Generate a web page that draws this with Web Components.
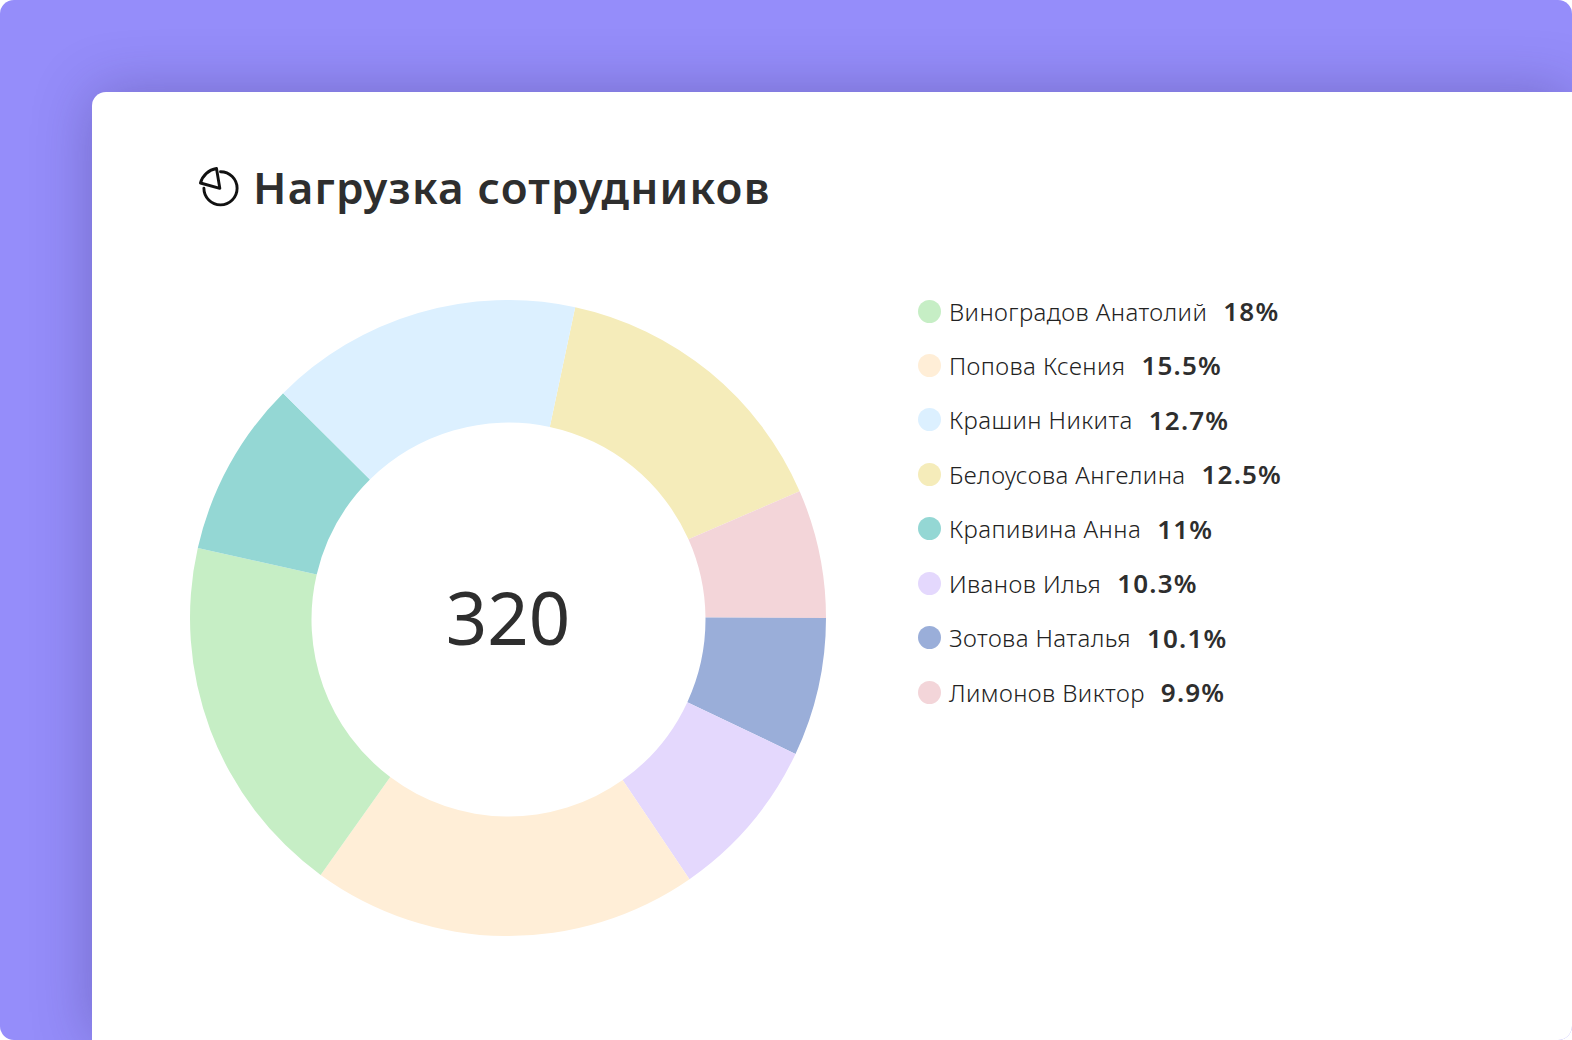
<!DOCTYPE html>
<html lang="ru">
<head>
<meta charset="utf-8">
<title>Нагрузка сотрудников</title>
<style>
  html, body { margin: 0; height: 100%; background: #fff; overflow: hidden; }
</style>
</head>
<body>
<app-panel>
  <load-card>
    <card-title>Нагрузка сотрудников</card-title>
    <load-donut total="320"></load-donut>
    <load-legend>
      <legend-row color="#c6eec5" pct="18%">Виноградов Анатолий</legend-row>
      <legend-row color="#ffeed7" pct="15.5%">Попова Ксения</legend-row>
      <legend-row color="#dcf0ff" pct="12.7%">Крашин Никита</legend-row>
      <legend-row color="#f5ecba" pct="12.5%">Белоусова Ангелина</legend-row>
      <legend-row color="#94d7d4" pct="11%">Крапивина Анна</legend-row>
      <legend-row color="#e4d8fd" pct="10.3%">Иванов Илья</legend-row>
      <legend-row color="#9aaed9" pct="10.1%">Зотова Наталья</legend-row>
      <legend-row color="#f3d5d9" pct="9.9%">Лимонов Виктор</legend-row>
    </load-legend>
  </load-card>
</app-panel>

<script>
const FONT = '"Noto Sans", "Open Sans", sans-serif';

class AppPanel extends HTMLElement {
  constructor(){
    super();
    this.attachShadow({mode:"open"});
    this.shadowRoot.innerHTML = `
      <style>
        :host {
          display: block;
          box-sizing: border-box;
          width: 100%;
          height: 1040px;
          padding: 92px 0 0 92px;
          background: #958dfa;
          border-radius: 14px;
          overflow: hidden;
        }
      </style>
      <slot></slot>
    `;
  }
}

class LoadCard extends HTMLElement {
  constructor(){
    super();
    this.attachShadow({mode:"open"});
    this.shadowRoot.innerHTML = `
      <style>
        :host {
          display: grid;
          grid-template-columns: 636px auto;
          grid-template-rows: auto 1fr;
          column-gap: 92px;
          align-content: start;
          box-sizing: border-box;
          height: 948px;
          padding: 62px 0 0 98px;
          background: #fff;
          border-radius: 14px 0 0 0;
          box-shadow: 0 0 60px rgba(40, 30, 90, .3);
          color: #2e2e2e;
          font-family: ${FONT};
        }
        ::slotted(card-title) { grid-column: 1 / -1; }
      </style>
      <slot></slot>
    `;
  }
}

class CardTitle extends HTMLElement {
  constructor(){
    super();
    this.attachShadow({mode:"open"});
    this.shadowRoot.innerHTML = `
      <style>
        :host {
          display: flex;
          align-items: center;
          gap: 14px;
          height: 66px;
          margin: 0 0 74px 9px;
          font-size: 44px;
          font-weight: 600;
          letter-spacing: 1.2px;
          white-space: nowrap;
        }
        svg { width: 40px; height: 40px; flex: none; }
      </style>
      <svg viewBox="0 0 40 40" fill="none" stroke="#111" stroke-width="2.9" stroke-linejoin="round" stroke-linecap="round">
        <path d="M21.5 4.7A16.6 16.6 0 1 1 4.9 21.3"/>
        <path d="M1.5 16A20 20 0 0 1 17.5 1.5L20.8 21.3Z"/>
      </svg>
      <span><slot></slot></span>
    `;
  }
}

class LoadDonut extends HTMLElement {
  constructor(){
    super();
    this.attachShadow({mode:"open"});
  }

  // angles are clockwise from 3 o'clock: outer edge, inner edge of each boundary
  getBoundaries(){
    return [
      [-77.8, -77.9], [-23.5, -24], [0, -0.6], [25.3, 24.8],
      [55.2, 54.6], [126.1, 126.9], [192.7, 193.2], [225, 225.3]
    ];
  }

  getColors(){
    return ["#f5ecba", "#f3d5d9", "#9aaed9", "#e4d8fd", "#ffeed7", "#c6eec5", "#94d7d4", "#dcf0ff"];
  }

  slice(start, end, color){
    const R = 318, r = 197, c = 318, holeX = 318.5, holeY = 319.5; // the hole sits a little low
    const pt = (rad, cx, cy, deg) => {
      const a = deg * Math.PI / 180;
      return (cx + rad * Math.cos(a)).toFixed(2) + " " + (cy + rad * Math.sin(a)).toFixed(2);
    };
    return `<path fill="${color}" d="M${pt(R, c, c, start[0])}A${R} ${R} 0 0 1 ${pt(R, c, c, end[0])}L${pt(r, holeX, holeY, end[1])}A${r} ${r} 0 0 0 ${pt(r, holeX, holeY, start[1])}Z"/>`;
  }

  connectedCallback(){
    const b = this.getBoundaries();
    const paths = this.getColors().map((color, i) => this.slice(b[i], b[(i + 1) % b.length], color)).join("");
    this.shadowRoot.innerHTML = `
      <style>
        :host {
          display: grid;
          place-items: center;
          width: 636px;
          height: 636px;
          margin-top: 6px;
        }
        svg, span { grid-area: 1 / 1; }
        svg { width: 636px; height: 636px; }
        span { font-size: 72.5px; line-height: 1; color: #2e2e2e; padding-bottom: 2px; }
      </style>
      <svg viewBox="0 0 636 636">${paths}</svg>
      <span>${this.getAttribute("total")}</span>
    `;
  }
}

class LoadLegend extends HTMLElement {
  constructor(){
    super();
    this.attachShadow({mode:"open"});
    this.shadowRoot.innerHTML = `
      <style>
        :host {
          display: flex;
          flex-direction: column;
          gap: 20.45px;
        }
      </style>
      <slot></slot>
    `;
  }
}

class LegendRow extends HTMLElement {
  constructor(){
    super();
    this.attachShadow({mode:"open"});
  }

  connectedCallback(){
    this.shadowRoot.innerHTML = `
      <style>
        :host {
          display: flex;
          align-items: center;
          height: 34px;
          font-size: 24px;
          font-weight: 300;
          letter-spacing: .42px;
          color: #222;
          white-space: nowrap;
        }
        i {
          width: 23px;
          height: 23px;
          margin-right: 8px;
          border-radius: 50%;
          background: ${this.getAttribute("color")};
        }
        b { margin-left: 16px; font-size: 26px; font-weight: 600; letter-spacing: 1.2px; color: #2e2e2e; }
      </style>
      <i></i><span><slot></slot></span><b>${this.getAttribute("pct")}</b>
    `;
  }
}

customElements.define("app-panel", AppPanel);
customElements.define("load-card", LoadCard);
customElements.define("card-title", CardTitle);
customElements.define("load-donut", LoadDonut);
customElements.define("load-legend", LoadLegend);
customElements.define("legend-row", LegendRow);
</script>
</body>
</html>
